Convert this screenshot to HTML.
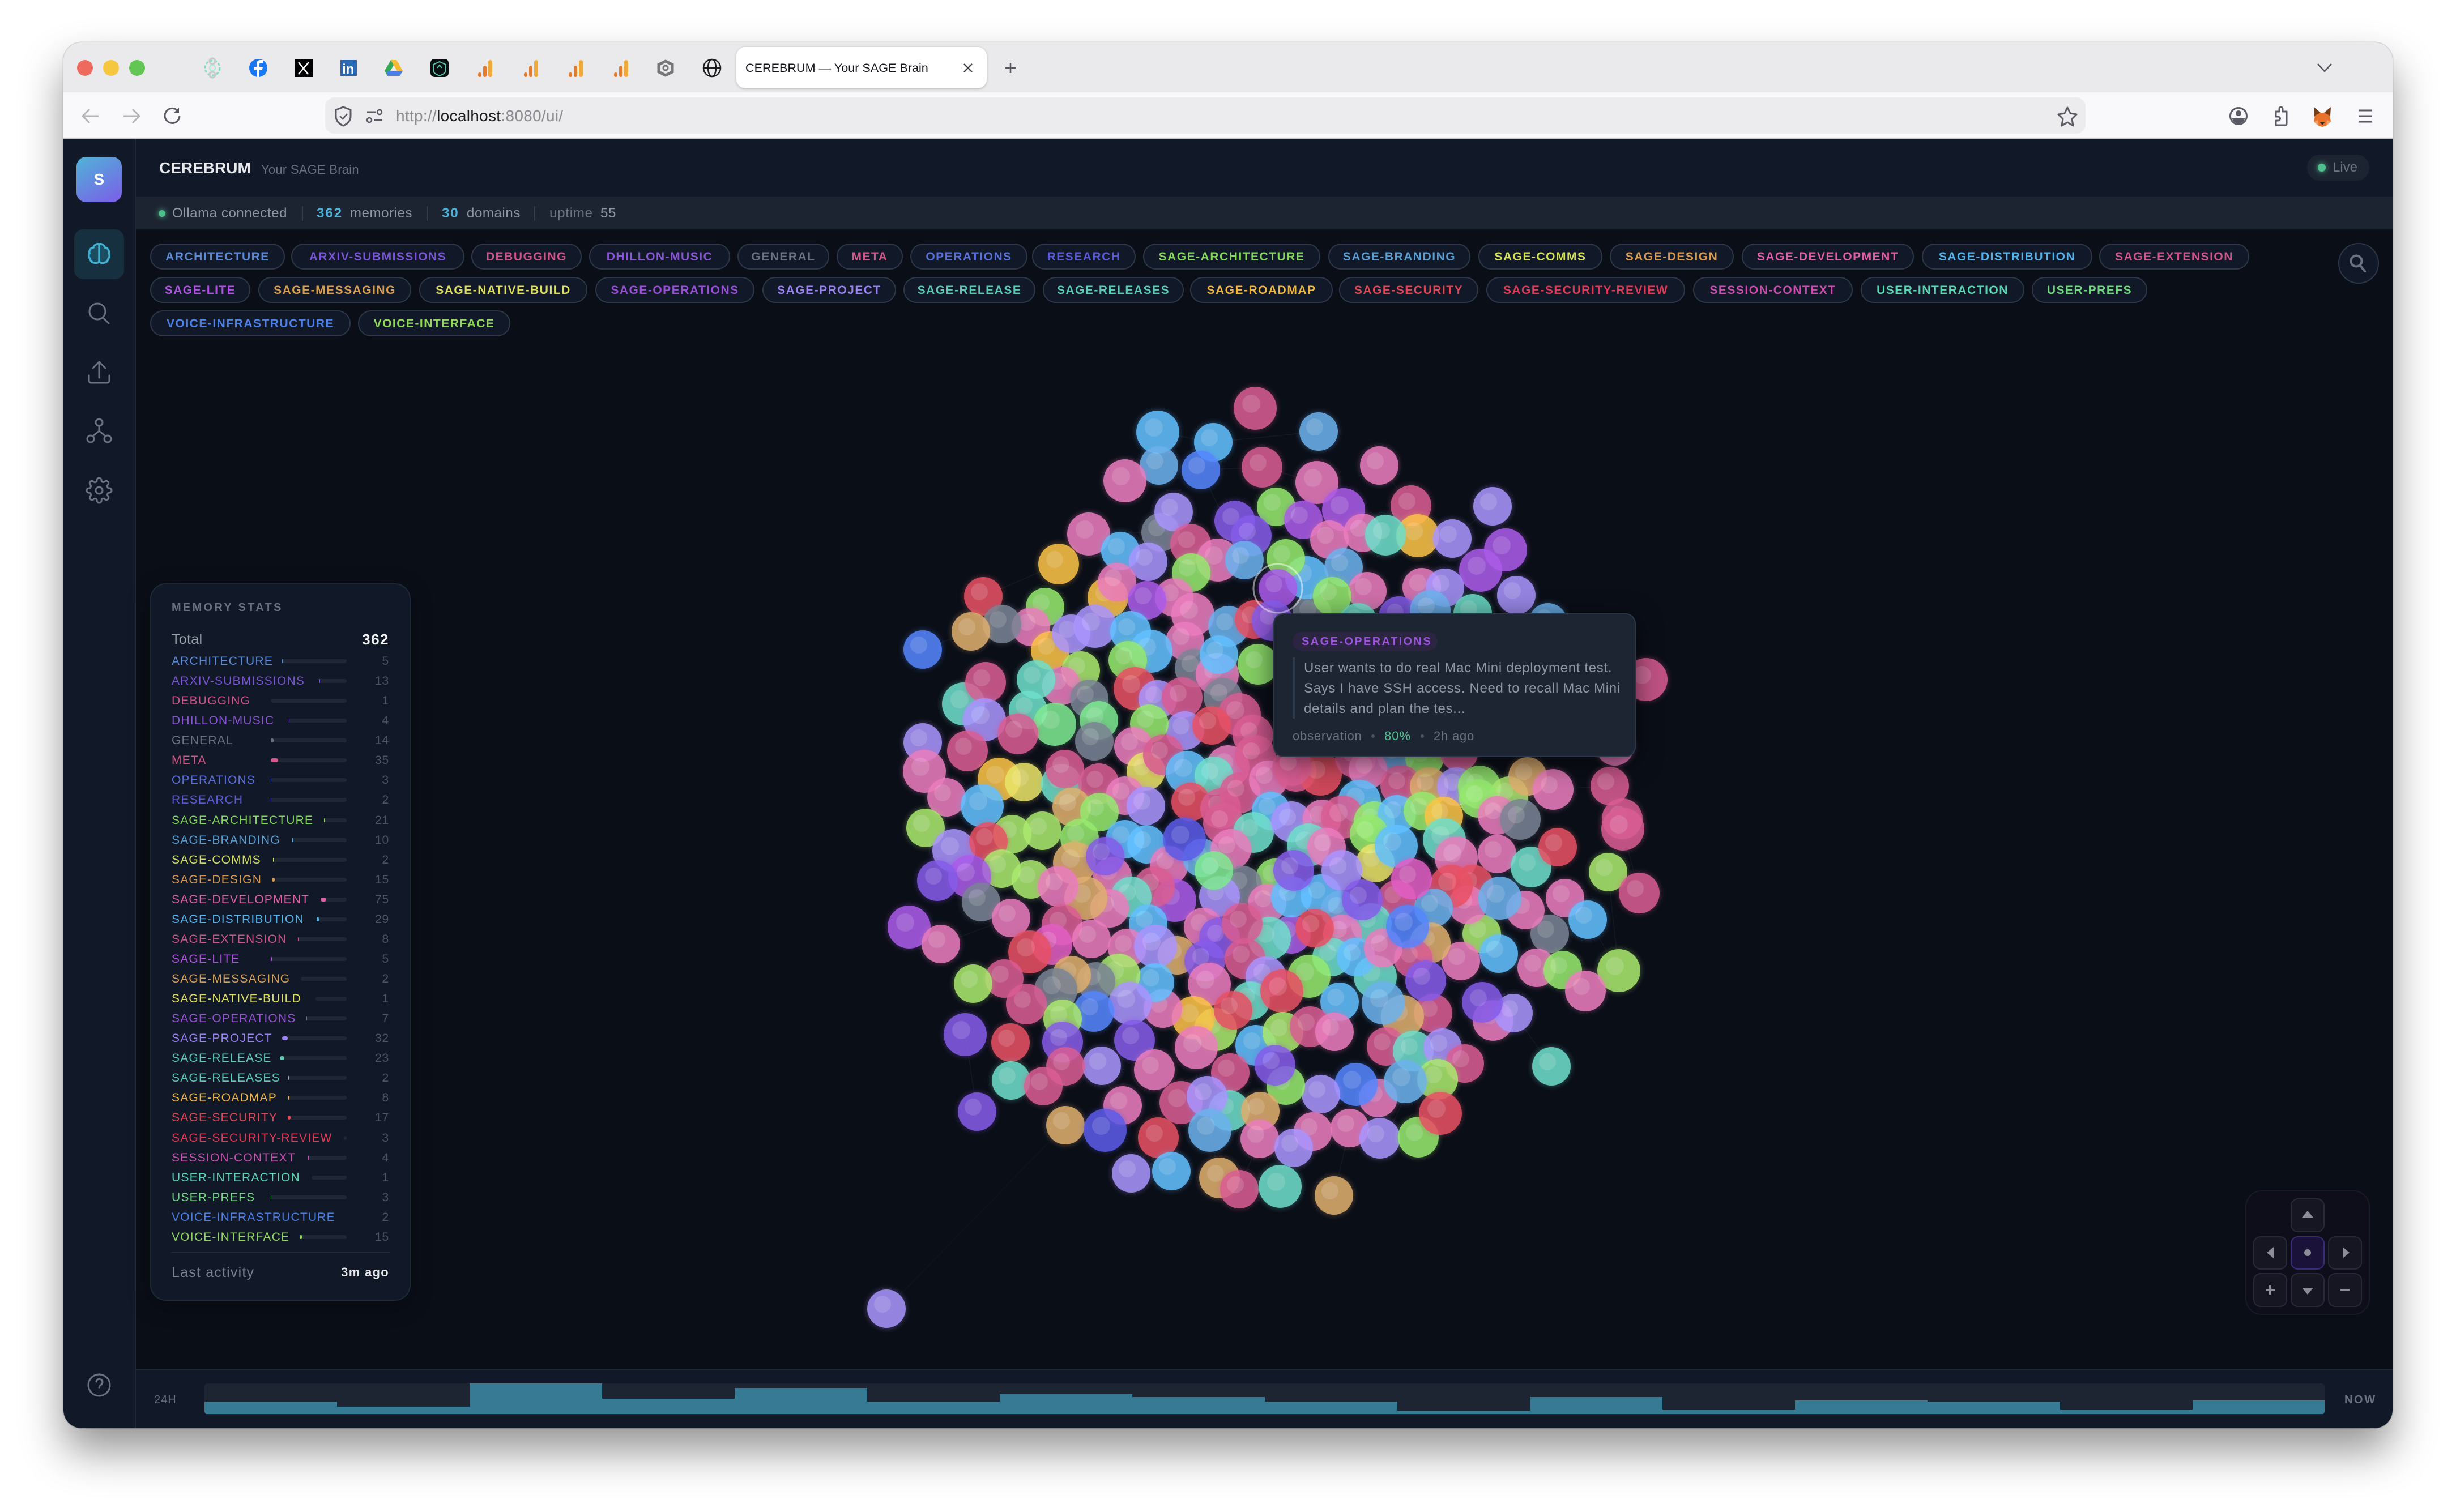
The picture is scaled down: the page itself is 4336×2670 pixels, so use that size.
<!DOCTYPE html>
<html lang="en"><head><meta charset="utf-8"><title>CEREBRUM — Your SAGE Brain</title>
<style>
html,body{margin:0;padding:0;width:4336px;height:2670px;overflow:hidden;background:#fff;font-family:"Liberation Sans",sans-serif}
#w{position:absolute;left:112px;top:75px;width:4112px;height:2447px;border-radius:32px;overflow:hidden;box-shadow:0 40px 75px rgba(0,0,0,.42),0 0 2px rgba(0,0,0,.5)}
#i{position:absolute;left:-112px;top:-75px;width:4336px;height:2670px}
.b{position:absolute}
.t{position:absolute;white-space:nowrap;line-height:40px;height:40px}
.c{position:absolute;box-sizing:border-box;height:46px;line-height:44px;text-align:center;background:#111827;border:2px solid #2d3748;border-radius:23px;font-size:21px;font-weight:700;letter-spacing:1.5px;white-space:nowrap}
.r{position:relative;height:35.07px;line-height:35px;font-size:21px;letter-spacing:1.2px;white-space:nowrap}
.r em{position:absolute;right:0;top:0;font-style:normal;color:#4d5564;letter-spacing:.8px}
.r u{position:absolute;top:14px;height:7px;background:#1f2735;border-radius:4px;text-decoration:none;display:block;right:75px}
.r u s{display:block;height:7px;border-radius:4px;text-decoration:none}
svg{position:absolute;left:0;top:0}
.a{color:#63c0ff}.e2{color:#ea7dbd}.cr{color:#d85d93}.d{color:#95e96e}.l{color:#a994fe}.f{color:#aa5ce9}.g{color:#6edeca}.h{color:#fcc347}.x{color:#e85064}.j{color:#7a8494}.k{color:#dfaf6e}.bl{color:#5586fe}.m{color:#855ce9}.n{color:#6cb2ec}.o{color:#e9e467}.p2{color:#aae96e}.q2{color:#7fe992}.mg{color:#e05fc4}.s{color:#5c5ce9}
</style></head><body>
<div id="w"><div id="i">
<div class="b" style="left:112px;top:75px;width:4112px;height:88px;background:#eaeaec"></div>
<div class="b" style="left:112px;top:163px;width:4112px;height:81px;background:#f9f9fb;border-bottom:1px solid #c9c9cd"></div>
<div class="b" style="left:1300px;top:83px;width:442px;height:73px;background:#fff;border-radius:16px;box-shadow:0 1px 4px rgba(0,0,0,.25)"></div>
<div class="t" style="left:1316px;top:100px;font-size:21.6px;color:#15141a">CEREBRUM — Your SAGE Brain</div>
<div class="b" style="left:574px;top:172px;width:3108px;height:64px;background:#ececee;border-radius:16px"></div>
<div class="t" style="left:699px;top:185px;font-size:28px;letter-spacing:.3px;color:#8a8a90">http://<span style="color:#1b1b20">localhost</span>:8080/ui/</div>

<div class="b" style="left:112px;top:245px;width:126px;height:2277px;background:#111827;border-right:2px solid #1f2937"></div>
<div class="b" style="left:240px;top:245px;width:3984px;height:102px;background:#111827"></div>
<div class="b" style="left:240px;top:347px;width:3984px;height:58px;background:#1d2431;border-bottom:2px solid #1a2130;box-sizing:border-box"></div>
<div class="b" style="left:240px;top:405px;width:3984px;height:2013px;background:#0a0e17"></div>
<div class="b" style="left:240px;top:2418px;width:3984px;height:104px;background:#111827;border-top:2px solid #1f2937;box-sizing:border-box"></div>

<div class="b" style="left:135px;top:277px;width:80px;height:80px;border-radius:17px;background:linear-gradient(150deg,#4fb4d8,#7c5ce8);color:#fff;font-weight:700;font-size:28px;line-height:80px;text-align:center">S</div>
<div class="b" style="left:131px;top:405px;width:88px;height:88px;border-radius:16px;background:#17303f"></div>

<div class="t" style="left:281px;top:277px;font-size:28px;font-weight:700;color:#e8eaee">CEREBRUM</div>
<div class="t" style="left:461px;top:280px;font-size:22px;letter-spacing:.25px;color:#6b7280">Your SAGE Brain</div>
<div class="b" style="left:280px;top:371px;width:12px;height:12px;border-radius:50%;background:#4fc08d;box-shadow:0 0 10px #4fc08d"></div>
<div class="t" style="left:304px;top:357px;font-size:24px;letter-spacing:.6px;color:#8f95a3">Ollama connected</div>
<div class="b" style="left:533px;top:364px;width:2px;height:26px;background:#343d4e"></div>
<div class="t" style="left:559px;top:357px;font-size:24px;font-weight:700;letter-spacing:2px;color:#4fb3d9">362</div>
<div class="t" style="left:618px;top:357px;font-size:24px;letter-spacing:.6px;color:#8f95a3">memories</div>
<div class="b" style="left:753px;top:364px;width:2px;height:26px;background:#343d4e"></div>
<div class="t" style="left:780px;top:357px;font-size:24px;font-weight:700;letter-spacing:2px;color:#4fb3d9">30</div>
<div class="t" style="left:824px;top:357px;font-size:24px;letter-spacing:.6px;color:#8f95a3">domains</div>
<div class="b" style="left:943px;top:364px;width:2px;height:26px;background:#343d4e"></div>
<div class="t" style="left:970px;top:357px;font-size:24px;letter-spacing:.8px;color:#6b7280">uptime</div>
<div class="t" style="left:1060px;top:357px;font-size:24px;letter-spacing:.6px;color:#8f95a3">55</div>

<div class="b" style="left:4073px;top:273px;width:110px;height:46px;border-radius:23px;background:#1d2431"></div>
<div class="b" style="left:4092px;top:289px;width:14px;height:14px;border-radius:50%;background:#4fc08d;box-shadow:0 0 10px #4fc08d"></div>
<div class="t" style="left:4118px;top:276px;font-size:24px;color:#6b7280">Live</div>

<div class="b" style="left:4128px;top:429px;width:72px;height:72px;box-sizing:border-box;border-radius:50%;background:#111827;border:2px solid #2d3748"></div>

<div class="b" style="left:0;top:430px">
<b class="c" style="left:265px;width:238px;color:#5b8bd9">ARCHITECTURE</b>
<b class="c" style="left:514px;width:306px;color:#7a55d6">ARXIV-SUBMISSIONS</b>
<b class="c" style="left:832px;width:195px;color:#d0558a">DEBUGGING</b>
<b class="c" style="left:1040px;width:249px;color:#8a55d6">DHILLON-MUSIC</b>
<b class="c" style="left:1302px;width:162px;color:#6b7280">GENERAL</b>
<b class="c" style="left:1477px;width:117px;color:#d8558a">META</b>
<b class="c" style="left:1607px;width:207px;color:#5a70d8">OPERATIONS</b>
<b class="c" style="left:1822px;width:183px;color:#5a5ad8">RESEARCH</b>
<b class="c" style="left:2018px;width:313px;color:#84d85a">SAGE-ARCHITECTURE</b>
<b class="c" style="left:2345px;width:251px;color:#5a9fd4">SAGE-BRANDING</b>
<b class="c" style="left:2610px;width:219px;color:#d4e05a">SAGE-COMMS</b>
<b class="c" style="left:2842px;width:219px;color:#d99a50">SAGE-DESIGN</b>
<b class="c" style="left:3075px;width:304px;color:#e060a8">SAGE-DEVELOPMENT</b>
<b class="c" style="left:3393px;width:301px;color:#56b4ec">SAGE-DISTRIBUTION</b>
<b class="c" style="left:3706px;width:265px;color:#d0558a">SAGE-EXTENSION</b>
</div>
<div class="b" style="left:0;top:489px">
<b class="c" style="left:265px;width:177px;color:#b055e0">SAGE-LITE</b>
<b class="c" style="left:456px;width:270px;color:#d9a050">SAGE-MESSAGING</b>
<b class="c" style="left:740px;width:297px;color:#e0e060">SAGE-NATIVE-BUILD</b>
<b class="c" style="left:1051px;width:281px;color:#9a50d8">SAGE-OPERATIONS</b>
<b class="c" style="left:1346px;width:236px;color:#9a85f0">SAGE-PROJECT</b>
<b class="c" style="left:1595px;width:233px;color:#5accb4">SAGE-RELEASE</b>
<b class="c" style="left:1841px;width:249px;color:#5acfb8">SAGE-RELEASES</b>
<b class="c" style="left:2101px;width:252px;color:#f0b840">SAGE-ROADMAP</b>
<b class="c" style="left:2364px;width:246px;color:#e04858">SAGE-SECURITY</b>
<b class="c" style="left:2624px;width:351px;color:#e03a58">SAGE-SECURITY-REVIEW</b>
<b class="c" style="left:2989px;width:282px;color:#cc50b0">SESSION-CONTEXT</b>
<b class="c" style="left:3285px;width:289px;color:#5ad8b8">USER-INTERACTION</b>
<b class="c" style="left:3587px;width:204px;color:#70d880">USER-PREFS</b>
</div>
<div class="b" style="left:0;top:548px">
<b class="c" style="left:265px;width:354px;color:#4a80e8">VOICE-INFRASTRUCTURE</b>
<b class="c" style="left:632px;width:269px;color:#90d858">VOICE-INTERFACE</b>
</div>

<svg width="4336" height="2670" viewBox="0 0 4336 2670" fill="none">
<defs>
<g id="p"><circle r="42" fill="currentColor" opacity=".035"/><circle r="39" fill="currentColor" opacity=".06"/><circle r="36.5" fill="currentColor" opacity=".07"/><circle r="34" fill="currentColor" opacity=".85"/><circle cx="-7" cy="-8" r="15" fill="#fff" opacity=".14"/></g>
<g id="q"><circle r="44" fill="currentColor" opacity=".035"/><circle r="41" fill="currentColor" opacity=".06"/><circle r="38.5" fill="currentColor" opacity=".07"/><circle r="36" fill="currentColor" opacity=".85"/><circle cx="-7" cy="-8" r="15" fill="#fff" opacity=".14"/></g>
<g id="r"><circle r="46" fill="currentColor" opacity=".035"/><circle r="43" fill="currentColor" opacity=".06"/><circle r="40.5" fill="currentColor" opacity=".07"/><circle r="38" fill="currentColor" opacity=".85"/><circle cx="-7" cy="-8" r="16" fill="#fff" opacity=".14"/></g>
</defs>
<!-- links -->
<path d="M1565 2311L1881 1987" stroke="#a8b0d8" stroke-opacity=".035" stroke-width="1.5"/>
<g stroke="#a8b0d8" stroke-opacity=".07" stroke-width="1.5">
<path d="M2044 763L2142 781M2142 781L2328 762M2046 822L1986 849M2120 830L2228 825M2228 825L2325 852M2435 822L2491 893M1922 943L2049 940M1869 996L1978 973M1736 1053L1869 996M1629 1147L1714 1115M2635 894L2564 951M2677 1051L2614 1007M2372 1002L2470 1089M2414 1044L2525 1078M2906 1200L2851 1318M2842 1388L2742 1394M2864 1446L2865 1464M2858 1714L2839 1540M2894 1577L2865 1464M2739 1883L2672 1789M2803 1624L2858 1714M2355 2111L2383 1992M2188 2100L2224 2011M1997 2072L2045 2009M1725 1963L1704 1827M1881 1987L1842 1918M2153 2080L2136 1996M2260 2095L2284 2027M1605 1637L1661 1667M1661 1667L1785 1621M2120 830L2197 989M2170 920L2300 1020M2260 1000L2400 1150M2400 1000L2380 1100M2100 1300L2170 1420M1740 1320L1800 1400M1900 1330L1860 1450M2300 1500L2500 1560M2550 1700L2650 1800M2430 1650L2300 1800M2040 1800L2180 1890M1880 1800L1980 1950M2500 1900L2450 2000"/>
</g>
<!-- bubbles -->
<g>
<use href="#r" x="2216" y="721" class="cr"/><use href="#r" x="2044" y="763" class="a"/><use href="#p" x="2046" y="822" class="n"/><use href="#p" x="2142" y="781" class="a"/><use href="#p" x="2120" y="830" class="bl"/><use href="#p" x="2328" y="762" class="n"/><use href="#r" x="1986" y="849" class="e2"/><use href="#q" x="2228" y="825" class="cr"/><use href="#r" x="2325" y="852" class="e2"/><use href="#p" x="2435" y="822" class="e2"/><use href="#q" x="2491" y="893" class="cr"/><use href="#p" x="2635" y="894" class="l"/><use href="#p" x="2253" y="895" class="d"/><use href="#q" x="2180" y="920" class="m"/><use href="#p" x="2301" y="918" class="f"/><use href="#q" x="2209" y="946" class="m"/><use href="#r" x="2372" y="900" class="f"/><use href="#p" x="2049" y="940" class="j"/><use href="#p" x="2072" y="904" class="l"/><use href="#r" x="1922" y="943" class="e2"/><use href="#q" x="2102" y="961" class="cr"/><use href="#r" x="2150" y="989" class="e2"/><use href="#p" x="2197" y="989" class="n"/><use href="#q" x="1869" y="996" class="h"/><use href="#p" x="1978" y="973" class="a"/><use href="#p" x="2027" y="992" class="l"/><use href="#p" x="2347" y="953" class="e2"/><use href="#p" x="2406" y="941" class="e2"/><use href="#r" x="2503" y="946" class="h"/><use href="#q" x="2446" y="945" class="g"/><use href="#p" x="2564" y="951" class="l"/><use href="#r" x="2658" y="971" class="f"/><use href="#r" x="2614" y="1007" class="f"/><use href="#p" x="2103" y="1011" class="d"/><use href="#p" x="2316" y="1083" class="j"/><use href="#r" x="2307" y="1020" class="a"/><use href="#p" x="2372" y="1002" class="n"/><use href="#p" x="2270" y="986" class="d"/><use href="#p" x="2414" y="1044" class="e2"/><use href="#p" x="2510" y="1037" class="e2"/><use href="#p" x="2551" y="1038" class="l"/><use href="#p" x="2677" y="1051" class="l"/><use href="#q" x="1956" y="1055" class="h"/><use href="#p" x="1972" y="1028" class="e2"/><use href="#p" x="2073" y="1055" class="e2"/><use href="#p" x="2025" y="1060" class="f"/><use href="#r" x="2106" y="1085" class="e2"/><use href="#p" x="2256" y="1039" class="f"/><use href="#p" x="2352" y="1053" class="d"/><use href="#p" x="1736" y="1053" class="x"/><use href="#p" x="1845" y="1072" class="d"/><use href="#p" x="1820" y="1107" class="e2"/><use href="#p" x="1769" y="1102" class="j"/><use href="#p" x="1714" y="1115" class="k"/><use href="#p" x="1629" y="1147" class="bl"/><use href="#p" x="1854" y="1149" class="h"/><use href="#p" x="1891" y="1119" class="l"/><use href="#r" x="1933" y="1106" class="l"/><use href="#q" x="1996" y="1115" class="a"/><use href="#q" x="2169" y="1106" class="n"/><use href="#p" x="2214" y="1094" class="x"/><use href="#q" x="2246" y="1096" class="m"/><use href="#p" x="2398" y="1099" class="g"/><use href="#q" x="2470" y="1089" class="m"/><use href="#q" x="2525" y="1078" class="n"/><use href="#p" x="2600" y="1083" class="g"/><use href="#p" x="2733" y="1099" class="n"/><use href="#p" x="2092" y="1132" class="e2"/><use href="#r" x="2032" y="1150" class="a"/><use href="#p" x="1991" y="1166" class="d"/><use href="#p" x="1908" y="1184" class="p2"/><use href="#p" x="2108" y="1180" class="j"/><use href="#r" x="2149" y="1191" class="e2"/><use href="#p" x="2152" y="1156" class="a"/><use href="#q" x="2221" y="1173" class="d"/><use href="#p" x="1874" y="1211" class="e2"/><use href="#p" x="1829" y="1200" class="g"/><use href="#p" x="1923" y="1234" class="j"/><use href="#r" x="2004" y="1216" class="x"/><use href="#r" x="1701" y="1243" class="g"/><use href="#q" x="1740" y="1205" class="cr"/><use href="#r" x="1738" y="1271" class="l"/><use href="#p" x="2044" y="1235" class="l"/><use href="#q" x="2087" y="1232" class="cr"/><use href="#p" x="2159" y="1231" class="j"/><use href="#p" x="1815" y="1254" class="g"/><use href="#r" x="1862" y="1279" class="q2"/><use href="#q" x="1797" y="1296" class="cr"/><use href="#p" x="1940" y="1272" class="q2"/><use href="#p" x="1932" y="1309" class="j"/><use href="#p" x="2092" y="1290" class="l"/><use href="#p" x="2029" y="1278" class="d"/><use href="#r" x="2188" y="1262" class="cr"/><use href="#p" x="2139" y="1281" class="x"/><use href="#q" x="2212" y="1298" class="cr"/><use href="#r" x="2906" y="1200" class="cr"/>
<use href="#p" x="1629" y="1311" class="l"/><use href="#q" x="1708" y="1326" class="cr"/><use href="#p" x="2001" y="1318" class="e2"/><use href="#p" x="2023" y="1362" class="o"/><use href="#q" x="2054" y="1333" class="cr"/><use href="#r" x="2168" y="1354" class="e2"/><use href="#q" x="2216" y="1334" class="cr"/><use href="#r" x="2096" y="1364" class="a"/><use href="#p" x="2143" y="1370" class="g"/><use href="#r" x="1632" y="1362" class="e2"/><use href="#p" x="1671" y="1408" class="e2"/><use href="#r" x="1764" y="1376" class="h"/><use href="#p" x="1808" y="1381" class="o"/><use href="#q" x="1874" y="1385" class="g"/><use href="#p" x="1880" y="1358" class="cr"/><use href="#q" x="1940" y="1384" class="cr"/><use href="#p" x="1986" y="1405" class="e2"/><use href="#p" x="2023" y="1423" class="l"/><use href="#p" x="2102" y="1416" class="x"/><use href="#q" x="2155" y="1428" class="cr"/><use href="#q" x="2189" y="1400" class="cr"/><use href="#p" x="2239" y="1377" class="e2"/><use href="#q" x="2288" y="1362" class="cr"/><use href="#r" x="2331" y="1367" class="x"/><use href="#p" x="2281" y="1354" class="cr"/><use href="#p" x="2464" y="1333" class="n"/><use href="#q" x="2393" y="1338" class="cr"/><use href="#p" x="2515" y="1338" class="d"/><use href="#p" x="2576" y="1328" class="cr"/><use href="#p" x="2851" y="1318" class="e2"/><use href="#p" x="2415" y="1359" class="e2"/><use href="#q" x="2473" y="1387" class="cr"/><use href="#p" x="2523" y="1389" class="k"/><use href="#p" x="2571" y="1389" class="l"/><use href="#r" x="2612" y="1390" class="d"/><use href="#p" x="2664" y="1405" class="p2"/><use href="#p" x="2697" y="1371" class="k"/><use href="#q" x="2742" y="1394" class="e2"/><use href="#p" x="2842" y="1388" class="cr"/>
<use href="#r" x="1734" y="1423" class="a"/><use href="#p" x="1892" y="1425" class="k"/><use href="#p" x="1941" y="1434" class="d"/><use href="#p" x="2244" y="1432" class="a"/><use href="#q" x="2160" y="1454" class="cr"/><use href="#q" x="2213" y="1470" class="g"/><use href="#q" x="2280" y="1451" class="l"/><use href="#r" x="2400" y="1415" class="a"/><use href="#p" x="2334" y="1446" class="e2"/><use href="#r" x="2370" y="1443" class="cr"/><use href="#q" x="2426" y="1451" class="d"/><use href="#p" x="2466" y="1438" class="a"/><use href="#p" x="2512" y="1432" class="d"/><use href="#p" x="2610" y="1410" class="d"/><use href="#p" x="2643" y="1440" class="e2"/><use href="#p" x="2549" y="1441" class="h"/><use href="#q" x="2684" y="1447" class="j"/><use href="#q" x="2864" y="1446" class="cr"/>
<use href="#p" x="1634" y="1462" class="p2"/><use href="#p" x="1787" y="1473" class="p2"/><use href="#p" x="1840" y="1467" class="p2"/><use href="#p" x="1906" y="1480" class="d"/><use href="#p" x="1986" y="1482" class="a"/><use href="#p" x="2024" y="1491" class="a"/><use href="#r" x="1684" y="1502" class="l"/><use href="#p" x="1745" y="1486" class="x"/><use href="#p" x="1768" y="1534" class="p2"/><use href="#p" x="1820" y="1553" class="p2"/><use href="#r" x="1897" y="1524" class="k"/><use href="#p" x="1964" y="1547" class="e2"/><use href="#p" x="2064" y="1528" class="e2"/><use href="#p" x="2122" y="1515" class="n"/><use href="#q" x="2173" y="1500" class="e2"/><use href="#p" x="1951" y="1512" class="m"/><use href="#r" x="2310" y="1492" class="g"/><use href="#p" x="2342" y="1496" class="e2"/><use href="#p" x="2417" y="1473" class="d"/><use href="#p" x="2428" y="1524" class="o"/><use href="#r" x="2550" y="1483" class="g"/><use href="#r" x="2571" y="1515" class="e2"/><use href="#p" x="2643" y="1508" class="e2"/><use href="#q" x="2703" y="1531" class="g"/><use href="#p" x="2750" y="1496" class="x"/><use href="#r" x="2865" y="1464" class="cr"/><use href="#p" x="2839" y="1540" class="p2"/><use href="#q" x="2894" y="1577" class="cr"/><use href="#p" x="2763" y="1586" class="e2"/><use href="#p" x="2803" y="1624" class="a"/><use href="#p" x="2736" y="1649" class="j"/><use href="#p" x="2713" y="1709" class="e2"/><use href="#r" x="2858" y="1714" class="p2"/><use href="#p" x="2759" y="1713" class="d"/><use href="#q" x="2799" y="1750" class="e2"/><use href="#p" x="2739" y="1883" class="g"/><use href="#q" x="2636" y="1802" class="e2"/><use href="#p" x="2672" y="1789" class="l"/><use href="#q" x="2617" y="1770" class="m"/><use href="#p" x="2616" y="1649" class="p2"/><use href="#p" x="2646" y="1684" class="a"/><use href="#p" x="2579" y="1697" class="e2"/><use href="#p" x="2693" y="1607" class="e2"/><use href="#q" x="2600" y="1563" class="x"/><use href="#p" x="2591" y="1598" class="e2"/><use href="#r" x="2562" y="1565" class="x"/><use href="#p" x="2466" y="1588" class="cr"/><use href="#p" x="2531" y="1603" class="n"/><use href="#q" x="2525" y="1665" class="k"/><use href="#q" x="2421" y="1631" class="g"/><use href="#p" x="2495" y="1693" class="cr"/><use href="#p" x="2530" y="1789" class="cr"/><use href="#r" x="2476" y="1795" class="k"/><use href="#r" x="2428" y="1725" class="g"/><use href="#p" x="2251" y="1550" class="d"/><use href="#p" x="2194" y="1563" class="j"/><use href="#q" x="2153" y="1583" class="l"/><use href="#r" x="2074" y="1590" class="f"/><use href="#q" x="2038" y="1566" class="cr"/><use href="#q" x="1997" y="1584" class="g"/><use href="#p" x="1959" y="1604" class="e2"/><use href="#r" x="1917" y="1586" class="k"/><use href="#q" x="1868" y="1565" class="e2"/><use href="#r" x="1712" y="1548" class="f"/><use href="#q" x="1655" y="1555" class="m"/><use href="#p" x="1732" y="1593" class="j"/><use href="#p" x="1785" y="1621" class="e2"/><use href="#q" x="1875" y="1633" class="cr"/><use href="#r" x="1605" y="1637" class="f"/><use href="#p" x="1661" y="1667" class="e2"/><use href="#q" x="1857" y="1668" class="mg"/><use href="#r" x="1818" y="1681" class="x"/><use href="#p" x="1927" y="1658" class="e2"/><use href="#p" x="2027" y="1631" class="a"/><use href="#p" x="2124" y="1637" class="e2"/><use href="#q" x="2153" y="1656" class="m"/><use href="#p" x="2237" y="1595" class="e2"/><use href="#p" x="2280" y="1650" class="f"/><use href="#r" x="2241" y="1657" class="g"/><use href="#q" x="2280" y="1584" class="a"/><use href="#q" x="2332" y="1580" class="a"/><use href="#p" x="2366" y="1607" class="n"/><use href="#p" x="2370" y="1649" class="e2"/><use href="#p" x="2351" y="1690" class="g"/><use href="#p" x="2394" y="1690" class="a"/><use href="#p" x="2442" y="1674" class="e2"/><use href="#p" x="1990" y="1674" class="e2"/><use href="#p" x="2078" y="1687" class="k"/><use href="#r" x="2040" y="1671" class="l"/><use href="#q" x="2127" y="1697" class="m"/><use href="#q" x="2198" y="1693" class="cr"/><use href="#q" x="2235" y="1725" class="l"/><use href="#r" x="2311" y="1724" class="d"/><use href="#p" x="2208" y="1767" class="g"/><use href="#r" x="2263" y="1750" class="x"/><use href="#r" x="2135" y="1738" class="e2"/><use href="#p" x="2365" y="1769" class="a"/><use href="#r" x="2146" y="1818" class="p2"/><use href="#r" x="2107" y="1797" class="h"/><use href="#p" x="2177" y="1784" class="x"/><use href="#p" x="2053" y="1781" class="e2"/><use href="#p" x="2039" y="1735" class="a"/><use href="#r" x="1975" y="1722" class="p2"/><use href="#r" x="1995" y="1772" class="l"/><use href="#p" x="1935" y="1733" class="j"/><use href="#p" x="1892" y="1722" class="k"/><use href="#r" x="1864" y="1748" class="j"/><use href="#q" x="1931" y="1786" class="bl"/><use href="#q" x="1812" y="1773" class="cr"/><use href="#p" x="1773" y="1728" class="cr"/><use href="#p" x="1718" y="1737" class="p2"/><use href="#p" x="1876" y="1799" class="p2"/><use href="#q" x="1876" y="1840" class="m"/><use href="#p" x="1784" y="1841" class="x"/><use href="#r" x="1704" y="1827" class="m"/><use href="#q" x="2003" y="1837" class="m"/><use href="#r" x="2112" y="1850" class="e2"/><use href="#q" x="2217" y="1846" class="a"/><use href="#q" x="2265" y="1823" class="p2"/><use href="#q" x="2313" y="1813" class="cr"/><use href="#p" x="2356" y="1822" class="e2"/><use href="#p" x="2447" y="1848" class="cr"/><use href="#q" x="2495" y="1856" class="g"/><use href="#p" x="2547" y="1850" class="l"/><use href="#p" x="2586" y="1878" class="cr"/><use href="#q" x="2538" y="1906" class="p2"/><use href="#p" x="2433" y="1939" class="e2"/><use href="#r" x="2481" y="1910" class="n"/><use href="#r" x="2394" y="1915" class="bl"/><use href="#p" x="2332" y="1932" class="l"/><use href="#p" x="2270" y="1917" class="d"/><use href="#q" x="2251" y="1881" class="m"/><use href="#p" x="2172" y="1894" class="cr"/><use href="#q" x="2038" y="1889" class="e2"/><use href="#p" x="1945" y="1882" class="l"/><use href="#p" x="1881" y="1883" class="cr"/><use href="#p" x="1785" y="1908" class="g"/><use href="#p" x="1842" y="1918" class="cr"/><use href="#p" x="1725" y="1963" class="m"/><use href="#p" x="1982" y="1952" class="e2"/><use href="#r" x="2085" y="1947" class="cr"/><use href="#q" x="2170" y="1961" class="g"/><use href="#q" x="2131" y="1936" class="l"/><use href="#p" x="2225" y="1962" class="k"/><use href="#r" x="2136" y="1996" class="n"/><use href="#p" x="1881" y="1987" class="k"/><use href="#r" x="1951" y="1996" class="s"/><use href="#q" x="2045" y="2009" class="x"/><use href="#p" x="2224" y="2011" class="e2"/><use href="#p" x="2318" y="1998" class="e2"/><use href="#p" x="2284" y="2027" class="l"/><use href="#p" x="2383" y="1992" class="e2"/><use href="#q" x="2436" y="2010" class="l"/><use href="#q" x="2504" y="2008" class="d"/><use href="#r" x="2543" y="1966" class="x"/><use href="#p" x="1997" y="2072" class="l"/><use href="#p" x="2068" y="2068" class="a"/><use href="#q" x="2153" y="2080" class="k"/><use href="#p" x="2188" y="2100" class="cr"/><use href="#r" x="2260" y="2095" class="g"/><use href="#p" x="2355" y="2111" class="k"/><use href="#p" x="1565" y="2311" class="l"/>
<!-- top-most in centre -->
<use href="#r" x="2091" y="1482" class="s"/><use href="#p" x="2143" y="1537" class="q2"/><use href="#q" x="2284" y="1537" class="m"/><use href="#q" x="2369" y="1537" class="l"/><use href="#r" x="2465" y="1494" class="a"/><use href="#q" x="2492" y="1552" class="mg"/><use href="#q" x="2405" y="1589" class="m"/><use href="#p" x="2321" y="1639" class="x"/><use href="#q" x="2193" y="1631" class="cr"/><use href="#r" x="2485" y="1636" class="bl"/><use href="#r" x="2648" y="1586" class="n"/><use href="#q" x="2517" y="1732" class="m"/><use href="#r" x="2442" y="1771" class="n"/>
</g>
<circle cx="2256" cy="1039" r="43" stroke="#fff" stroke-opacity=".5" stroke-width="3"/>

<!-- tab bar -->
<circle cx="150" cy="120" r="14" fill="#ee6a5f"/><circle cx="196" cy="120" r="14" fill="#f5c63f"/><circle cx="242" cy="120" r="14" fill="#62c554"/>
<g stroke-width="3"><circle cx="375" cy="120" r="13" stroke="#7fdcc4" stroke-dasharray="5 3"/><circle cx="375" cy="108" r="5" stroke="#c8c8c8"/><circle cx="375" cy="132" r="5" stroke="#c8c8c8"/><circle cx="375" cy="120" r="5" stroke="#a8e8d8" stroke-width="2"/></g>
<circle cx="456" cy="120" r="16" fill="#1877f2"/><path d="M458 136v-13h5l1-5h-6v-4c0-2 1-3 3-3h3v-5h-4c-5 0-7 3-7 7v5h-5v5h5v13z" fill="#fff"/>
<rect x="520" y="104" width="32" height="32" fill="#000"/><path d="M527 110l17 21M545 110l-18 21" stroke="#fff" stroke-width="2.5"/>
<rect x="601" y="106" width="29" height="28" fill="#2867b2"/><text x="604" y="130" font-size="24" font-weight="700" fill="#fff" font-family="Liberation Sans,sans-serif">in</text>
<path d="M690 106h10l11 19h-10z" fill="#f5b82e"/><path d="M690 106l-11 19 5 9 11-19z" fill="#36a853"/><path d="M684 125h27l-5 9h-22z" fill="#4a7fe8"/>
<path d="M768 104h16q8 0 8 8v16q0 8-8 8h-16q-8 0-8-8v-16q0-8 8-8z" fill="#0a0f12"/><path d="M776 109l11 5v10c0 5-5 7-11 10-6-3-11-5-11-10v-10z" stroke="#58c8a8" stroke-width="2"/><path d="M772 120l4-5 4 5" stroke="#58c8a8" stroke-width="2"/>
<g id="ga"><rect x="844" y="128" width="6" height="8" rx="3" fill="#e37c2e"/><rect x="853" y="116" width="6" height="20" rx="3" fill="#e37c2e"/><rect x="862" y="106" width="7" height="30" rx="3.5" fill="#f0a93b"/></g>
<use href="#ga" x="81"/><use href="#ga" x="160"/><use href="#ga" x="240"/>
<path d="M1175 108l12 6v13l-12 6-12-6v-13z" stroke="#777" stroke-width="5"/><circle cx="1175" cy="120" r="4" stroke="#777" stroke-width="3"/>
<g stroke="#1b1b20" stroke-width="2.5"><circle cx="1257" cy="120" r="15"/><ellipse cx="1257" cy="120" rx="7" ry="15"/><path d="M1242 120h30"/></g>
<path d="M1702 113l14 14M1716 113l-14 14" stroke="#3a3a40" stroke-width="2.5"/>
<path d="M1784 111v18M1775 120h18" stroke="#55555e" stroke-width="2.5"/>
<path d="M4092 113l12 13 12-13" stroke="#55555e" stroke-width="2.5"/>
<!-- toolbar -->
<path d="M146 205h28M158 193l-12 12 12 12M218 205h28M234 193l12 12-12 12" stroke="#b5b5ba" stroke-width="3"/>
<path d="M313 195a13 13 0 1 0 4 10" stroke="#5b5b66" stroke-width="3"/><path d="M316 190v10h-10z" fill="#5b5b66"/>
<path d="M606 189l13 5v11c0 9-6 14-13 17-7-3-13-8-13-17v-11z" stroke="#5b5b66" stroke-width="3"/><path d="M600 205l5 5 8-9" stroke="#5b5b66" stroke-width="2.5"/>
<path d="M648 198h15M660 212h15" stroke="#5b5b66" stroke-width="3"/><circle cx="670" cy="198" r="4" stroke="#5b5b66" stroke-width="2.5"/><circle cx="652" cy="212" r="4" stroke="#5b5b66" stroke-width="2.5"/>
<path d="M3650 190l5 10 11 2-8 8 2 12-10-6-10 6 2-12-8-8 11-2z" stroke="#5b5b66" stroke-width="3" stroke-linejoin="round"/>
<circle cx="3952" cy="205" r="14.5" stroke="#5b5b66" stroke-width="3"/><circle cx="3952" cy="200" r="5" fill="#5b5b66"/><path d="M3941 209h22a11 9 0 0 1-22 0z" fill="#5b5b66"/>
<path d="M4018 197h6v-5a3 3 0 0 1 6 0v5h7v22a2 2 0 0 1-2 2h-17v-8h4a3 3 0 0 0 0-7h-4z" stroke="#5b5b66" stroke-width="3" stroke-linejoin="round"/>
<path d="M4085 189l12 10-8 12-3-6z" fill="#763d16"/><path d="M4115 189l-12 10 8 12 3-6z" fill="#763d16"/><path d="M4087 204l10-5h6l10 5 2 11-8 7-7 2-7-2-8-7z" fill="#e8722a"/><path d="M4096 216l4 5 4-5z" fill="#3a2a20"/><path d="M4085 215l8 7-1-10zM4115 215l-8 7 1-10z" fill="#f5a067"/>
<path d="M4164 195h24M4164 205h24M4164 215h24" stroke="#5b5b66" stroke-width="3"/>
<!-- sidebar -->
<path d="M175 431a8 8 0 0 0-10 6 8 8 0 0 0-7 10 8 8 0 0 0 1 10 8 8 0 0 0 7 7 8 8 0 0 0 9-2 8 8 0 0 0 9 2 8 8 0 0 0 7-7 8 8 0 0 0 1-10 8 8 0 0 0-7-10 8 8 0 0 0-10-6zM175 433v28" stroke="#3fb2d4" stroke-width="3.5" fill="#1b4c5f"/>
<g stroke="#6b7280" stroke-width="3" stroke-linecap="round" stroke-linejoin="round">
<circle cx="172" cy="550" r="14"/><path d="M182 561l10 10"/>
<path d="M157 663v9a4 4 0 0 0 4 4h28a4 4 0 0 0 4-4v-9M175 667v-27M164 650l11-11 11 11"/>
<circle cx="175" cy="746" r="6"/><circle cx="160" cy="775" r="6"/><circle cx="190" cy="775" r="6"/><path d="M175 752v9M175 761l-11 9M175 761l11 9"/>
<g transform="translate(151 842) scale(2)" stroke-width="1.5"><circle cx="12" cy="12" r="3"/><path d="M19.4 15a1.65 1.65 0 0 0 .33 1.82l.06.06a2 2 0 0 1 0 2.83 2 2 0 0 1-2.83 0l-.06-.06a1.65 1.65 0 0 0-1.82-.33 1.65 1.65 0 0 0-1 1.51V21a2 2 0 0 1-2 2 2 2 0 0 1-2-2v-.09A1.65 1.65 0 0 0 9 19.4a1.65 1.65 0 0 0-1.82.33l-.06.06a2 2 0 0 1-2.83 0 2 2 0 0 1 0-2.83l.06-.06a1.65 1.65 0 0 0 .33-1.82 1.65 1.65 0 0 0-1.51-1H3a2 2 0 0 1-2-2 2 2 0 0 1 2-2h.09A1.65 1.65 0 0 0 4.6 9a1.65 1.65 0 0 0-.33-1.82l-.06-.06a2 2 0 0 1 0-2.83 2 2 0 0 1 2.83 0l.06.06a1.65 1.65 0 0 0 1.82.33H9a1.65 1.65 0 0 0 1-1.51V3a2 2 0 0 1 2-2 2 2 0 0 1 2 2v.09a1.65 1.65 0 0 0 1 1.51 1.65 1.65 0 0 0 1.82-.33l.06-.06a2 2 0 0 1 2.83 0 2 2 0 0 1 0 2.83l-.06.06a1.65 1.65 0 0 0-.33 1.82V9a1.65 1.65 0 0 0 1.51 1H21a2 2 0 0 1 2 2 2 2 0 0 1-2 2h-.09a1.65 1.65 0 0 0-1.51 1z"/></g>
<circle cx="175" cy="2446" r="19"/><path d="M170 2440a5.500 5.500 0 1 1 7 6l-2 4"/>
</g>
<circle cx="4160" cy="461" r="9.500" stroke="#6b7280" stroke-width="4"/><path d="M4167 469l8 10" stroke="#6b7280" stroke-width="4" stroke-linecap="round"/>
<!-- nav -->
<rect x="3965" y="2103" width="218" height="218" rx="28" fill="#0e0e1a" stroke="#1a1a28" stroke-width="2"/>
<g fill="#161622" stroke="#28283a" stroke-width="2"><rect x="4045" y="2117" width="58" height="58" rx="12"/><rect x="3979" y="2184" width="58" height="57" rx="12"/><rect x="4111" y="2184" width="58" height="57" rx="12"/><rect x="3979" y="2249" width="58" height="58" rx="12"/><rect x="4045" y="2249" width="58" height="58" rx="12"/><rect x="4111" y="2249" width="58" height="58" rx="12"/></g>
<rect x="4045" y="2184" width="58" height="57" rx="12" fill="#1a1238" stroke="#3a2a7a" stroke-width="2"/>
<g fill="#8c8c98"><path d="M4064 2150h20l-10-12zM4014 2202v20l-12-10zM4136 2202v20l12-10zM4064 2274h20l-10 12z"/><circle cx="4074" cy="2212" r="6"/><path d="M4000 2276h16v4h-16zM4006 2270h4v16h-4zM4132 2276h16v4h-16z"/></g>
</svg>

<!-- memory panel -->
<div class="b" style="left:265px;top:1030px;width:460px;height:1267px;box-sizing:border-box;background:#111827;border:2px solid #1f2937;border-radius:28px;box-shadow:0 10px 40px rgba(0,0,0,.3)"></div>
<div class="t" style="left:303px;top:1053px;font-size:20px;font-weight:700;letter-spacing:3.3px;color:#6b7280">MEMORY STATS</div>
<div class="t" style="left:303px;top:1109px;font-size:25px;letter-spacing:.3px;color:#9ca3af">Total</div>
<div class="t" style="right:3649px;top:1109px;font-size:26px;font-weight:700;letter-spacing:1.5px;color:#f3f4f6">362</div>
<div class="b" style="left:303px;top:1150px;width:384px">
<div class="r"><span style="color:#5b8bd9">ARCHITECTURE</span><u style="left:195px"><s style="width:2px;background:#5b8bd9"></s></u><em>5</em></div>
<div class="r"><span style="color:#7a55d6">ARXIV-SUBMISSIONS</span><u style="left:260px"><s style="width:2px;background:#7a55d6"></s></u><em>13</em></div>
<div class="r"><span style="color:#d0558a">DEBUGGING</span><u style="left:175px"></u><em>1</em></div>
<div class="r"><span style="color:#8a55d6">DHILLON-MUSIC</span><u style="left:207px"><s style="width:1px;background:#8a55d6"></s></u><em>4</em></div>
<div class="r"><span style="color:#6b7280">GENERAL</span><u style="left:175px"><s style="width:5px;background:#6b7280"></s></u><em>14</em></div>
<div class="r"><span style="color:#d8558a">META</span><u style="left:175px"><s style="width:13px;background:#d8558a"></s></u><em>35</em></div>
<div class="r"><span style="color:#5a70d8">OPERATIONS</span><u style="left:175px"><s style="width:1px;background:#5a70d8"></s></u><em>3</em></div>
<div class="r"><span style="color:#5a5ad8">RESEARCH</span><u style="left:175px"><s style="width:1px;background:#5a5ad8"></s></u><em>2</em></div>
<div class="r"><span style="color:#84d85a">SAGE-ARCHITECTURE</span><u style="left:269px"><s style="width:2px;background:#84d85a"></s></u><em>21</em></div>
<div class="r"><span style="color:#5a9fd4">SAGE-BRANDING</span><u style="left:212px"><s style="width:3px;background:#5a9fd4"></s></u><em>10</em></div>
<div class="r"><span style="color:#d4e05a">SAGE-COMMS</span><u style="left:179px"><s style="width:1px;background:#d4e05a"></s></u><em>2</em></div>
<div class="r"><span style="color:#d99a50">SAGE-DESIGN</span><u style="left:177px"><s style="width:5px;background:#d99a50"></s></u><em>15</em></div>
<div class="r"><span style="color:#e060a8">SAGE-DEVELOPMENT</span><u style="left:263px"><s style="width:10px;background:#e060a8"></s></u><em>75</em></div>
<div class="r"><span style="color:#56b4ec">SAGE-DISTRIBUTION</span><u style="left:256px"><s style="width:4px;background:#56b4ec"></s></u><em>29</em></div>
<div class="r"><span style="color:#d0558a">SAGE-EXTENSION</span><u style="left:223px"><s style="width:2px;background:#d0558a"></s></u><em>8</em></div>
<div class="r"><span style="color:#b055e0">SAGE-LITE</span><u style="left:175px"><s style="width:2px;background:#b055e0"></s></u><em>5</em></div>
<div class="r"><span style="color:#d9a050">SAGE-MESSAGING</span><u style="left:228px"></u><em>2</em></div>
<div class="r"><span style="color:#e0e060">SAGE-NATIVE-BUILD</span><u style="left:254px"></u><em>1</em></div>
<div class="r"><span style="color:#9a50d8">SAGE-OPERATIONS</span><u style="left:238px"><s style="width:1px;background:#9a50d8"></s></u><em>7</em></div>
<div class="r"><span style="color:#9a85f0">SAGE-PROJECT</span><u style="left:195px"><s style="width:10px;background:#9a85f0"></s></u><em>32</em></div>
<div class="r"><span style="color:#5accb4">SAGE-RELEASE</span><u style="left:191px"><s style="width:8px;background:#5accb4"></s></u><em>23</em></div>
<div class="r"><span style="color:#5acfb8">SAGE-RELEASES</span><u style="left:206px"><s style="width:1px;background:#5acfb8"></s></u><em>2</em></div>
<div class="r"><span style="color:#f0b840">SAGE-ROADMAP</span><u style="left:206px"><s style="width:2px;background:#f0b840"></s></u><em>8</em></div>
<div class="r"><span style="color:#e04858">SAGE-SECURITY</span><u style="left:205px"><s style="width:5px;background:#e04858"></s></u><em>17</em></div>
<div class="r"><span style="color:#e03a58">SAGE-SECURITY-REVIEW</span><u style="left:304px"></u><em>3</em></div>
<div class="r"><span style="color:#cc50b0">SESSION-CONTEXT</span><u style="left:241px"><s style="width:1px;background:#cc50b0"></s></u><em>4</em></div>
<div class="r"><span style="color:#5ad8b8">USER-INTERACTION</span><u style="left:247px"></u><em>1</em></div>
<div class="r"><span style="color:#70d880">USER-PREFS</span><u style="left:175px"><s style="width:1px;background:#70d880"></s></u><em>3</em></div>
<div class="r"><span style="color:#4a80e8">VOICE-INFRASTRUCTURE</span><em>2</em></div>
<div class="r"><span style="color:#90d858">VOICE-INTERFACE</span><u style="left:226px"><s style="width:4px;background:#90d858"></s></u><em>15</em></div>
</div>
<div class="b" style="left:302px;top:2211px;width:386px;height:2px;background:#1f2937"></div>
<div class="t" style="left:303px;top:2227px;font-size:25px;letter-spacing:1.2px;color:#7a8090">Last activity</div>
<div class="t" style="right:3649px;top:2227px;font-size:22px;font-weight:700;letter-spacing:1.3px;color:#e5e7eb">3m ago</div>

<!-- tooltip -->
<div class="b" style="left:2248px;top:1083px;width:640px;height:254px;box-sizing:border-box;background:#1d2432;border:2px solid #2d3748;border-radius:18px;box-shadow:0 10px 45px rgba(0,0,0,.55)"></div>
<div class="b" style="left:2282px;top:1116px;width:256px;height:33px;border-radius:17px;background:#2c2541"></div>
<div class="t" style="left:2298px;top:1113px;font-size:20px;font-weight:700;letter-spacing:2.4px;color:#9d55e0">SAGE-OPERATIONS</div>
<div class="b" style="left:2282px;top:1161px;width:4px;height:108px;background:#2d3a4e"></div>
<div class="t" style="left:2302px;top:1160px;font-size:24px;letter-spacing:.68px;color:#8f96a5">User wants to do real Mac Mini deployment test.</div>
<div class="t" style="left:2302px;top:1196px;font-size:24px;letter-spacing:.68px;color:#8f96a5">Says I have SSH access. Need to recall Mac Mini</div>
<div class="t" style="left:2302px;top:1232px;font-size:24px;letter-spacing:.68px;color:#8f96a5">details and plan the tes...</div>
<div class="t" style="left:2282px;top:1280px;font-size:22px;letter-spacing:.8px;color:#6b7280">observation</div>
<div class="b" style="left:2421px;top:1297px;width:6px;height:6px;border-radius:50%;background:#4b5563"></div>
<div class="t" style="left:2444px;top:1280px;font-size:22px;letter-spacing:1px;color:#4fc08d">80%</div>
<div class="b" style="left:2508px;top:1297px;width:6px;height:6px;border-radius:50%;background:#4b5563"></div>
<div class="t" style="left:2531px;top:1280px;font-size:22px;letter-spacing:.8px;color:#6b7280">2h ago</div>

<!-- timeline -->
<div class="b" style="left:361px;top:2443px;width:3743px;height:55px;background:#1e2532;border-radius:6px;overflow:hidden">
<svg width="3743" height="55" viewBox="0 0 3743 55"><g fill="#377a94"><rect x="0" y="32" width="234" height="22"/><rect x="234" y="41" width="234" height="13"/><rect x="468" y="0" width="234" height="54"/><rect x="702" y="27" width="234" height="27"/><rect x="936" y="8" width="234" height="46"/><rect x="1170" y="32" width="234" height="22"/><rect x="1404" y="19" width="234" height="35"/><rect x="1638" y="24" width="234" height="30"/><rect x="1872" y="32" width="234" height="22"/><rect x="2106" y="48" width="234" height="6"/><rect x="2340" y="24" width="234" height="30"/><rect x="2574" y="46" width="234" height="8"/><rect x="2808" y="30" width="234" height="24"/><rect x="3042" y="32" width="234" height="22"/><rect x="3276" y="46" width="234" height="8"/><rect x="3510" y="30" width="233" height="24"/></g></svg>
</div>
<div class="t" style="left:272px;top:2452px;font-size:20px;letter-spacing:1px;color:#6b7280">24H</div>
<div class="t" style="left:4139px;top:2452px;font-size:20px;font-weight:700;letter-spacing:2.6px;color:#6b7280">NOW</div>
</div></div>
</body></html>
